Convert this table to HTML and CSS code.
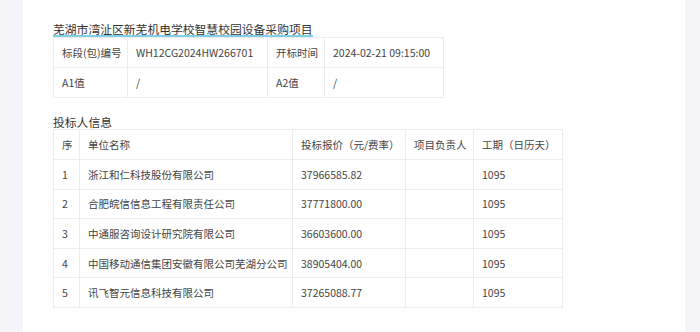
FILE: index.html
```html
<!DOCTYPE html>
<html lang="zh-CN">
<head>
<meta charset="utf-8">
<link rel="stylesheet" href="styles.css">
</head>
<body>
<div class="page">
  <div class="panel">
    <div class="title-wrap"><span class="title">芜湖市湾沚区新芜机电学校智慧校园设备采购项目</span></div>
    <table class="info">
      <colgroup><col class="c1"><col class="c2"><col class="c3"><col class="c4"></colgroup>
      <tr><td>标段(包)编号</td><td>WH12CG2024HW266701</td><td>开标时间</td><td>2024-02-21 09:15:00</td></tr>
      <tr><td>A1值</td><td>/</td><td>A2值</td><td>/</td></tr>
    </table>
    <div class="section">投标人信息</div>
    <table class="bids">
      <colgroup><col class="b1"><col class="b2"><col class="b3"><col class="b4"><col class="b5"></colgroup>
      <tr class="head"><td>序</td><td>单位名称</td><td>投标报价（元/费率）</td><td>项目负责人</td><td>工期（日历天）</td></tr>
      <tr><td>1</td><td>浙江和仁科技股份有限公司</td><td>37966585.82</td><td></td><td>1095</td></tr>
      <tr><td>2</td><td>合肥皖信信息工程有限责任公司</td><td>37771800.00</td><td></td><td>1095</td></tr>
      <tr><td>3</td><td>中通服咨询设计研究院有限公司</td><td>36603600.00</td><td></td><td>1095</td></tr>
      <tr><td>4</td><td>中国移动通信集团安徽有限公司芜湖分公司</td><td>38905404.00</td><td></td><td>1095</td></tr>
      <tr><td>5</td><td>讯飞智元信息科技有限公司</td><td>37265088.77</td><td></td><td>1095</td></tr>
    </table>
  </div>
</div>
</body>
</html>
```
FILE: styles.css
```css
html, body {
  margin: 0;
  padding: 0;
  height: 100%;
}
body {
  background: #f4f4f9;
  font-family: "Noto Sans CJK SC", "Noto Sans", sans-serif;
  font-size: 11.8px;
  color: #444;
}
.page {
  display: flex;
  height: 100%;
  padding: 0 15px 0 23px;
  box-sizing: border-box;
}
.panel {
  flex: 1;
  background: #fff;
  padding: 22px 0 0 30px;
}
.title-wrap {
  line-height: 13px;
  height: 15px;
}
.title {
  display: inline-block;
  color: #333;
  border-bottom: 2px solid #7fd0e6;
  line-height: 13px;
}
table {
  border-collapse: collapse;
  table-layout: fixed;
  font-size: 10.5px;
}
td {
  border: 1px solid #ececec;
  padding: 0 8px;
  white-space: nowrap;
  color: #444;
}
.info { width: 390px; }
.info tr { height: 30px; }
.c1 { width: 74px; }
.c2 { width: 140px; }
.c3 { width: 57px; }
.c4 { width: 119px; }
.section {
  margin-top: 16px;
  line-height: 15px;
  color: #333;
}
.bids { width: 509px; }
.bids tr { height: 29.6px; }
.bids tr.head { height: 30px; }
.b1 { width: 26px; }
.b2 { width: 213px; }
.b3 { width: 113px; }
.b4 { width: 68px; }
.b5 { width: 89px; }
```
